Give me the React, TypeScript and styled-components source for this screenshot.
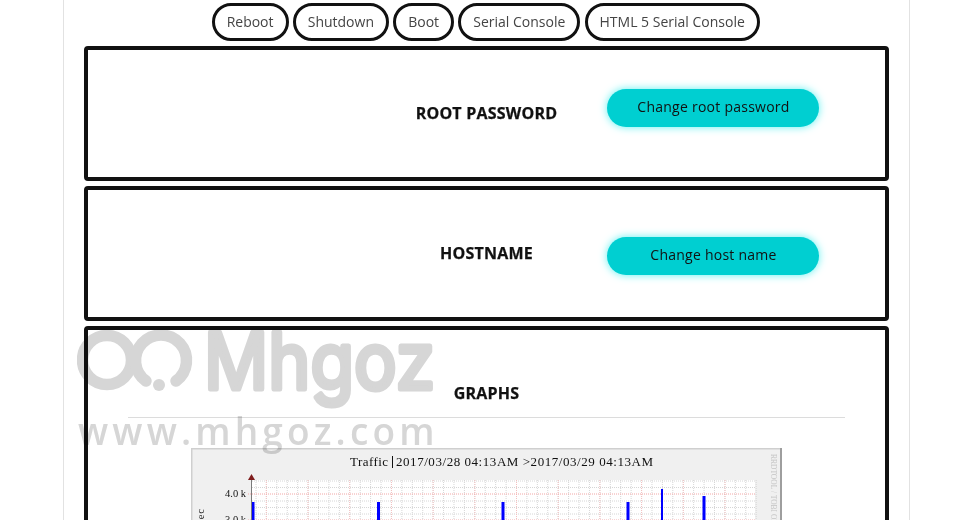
import styled, { createGlobalStyle } from 'styled-components';

const actions = ['Reboot', 'Shutdown', 'Boot', 'Serial Console', 'HTML 5 Serial Console'];

const settings = [
  { title: 'ROOT PASSWORD', action: 'Change root password', lift: 11 },
  { title: 'HOSTNAME', action: 'Change host name', lift: -5 },
];

export default function App() {
  return (
    <>
      <GlobalStyle />
      <Page>
        <Toolbar>
          {actions.map((label) => (
            <PillButton key={label}>{label}</PillButton>
          ))}
        </Toolbar>
        {settings.map((item) => (
          <SettingPanel key={item.title}>
            <SettingTitle>{item.title}</SettingTitle>
            <ActionButton $lift={item.lift}>{item.action}</ActionButton>
          </SettingPanel>
        ))}
        <GraphPanel>
          <GraphTitle>GRAPHS</GraphTitle>
          <Rule />
          <TrafficGraph />
        </GraphPanel>
        <Watermark>
          <LogoMark />
          <WatermarkUrl>www.mhgoz.com</WatermarkUrl>
        </Watermark>
      </Page>
    </>
  );
}

function LogoMark() {
  return (
    <LogoSvg width="360" height="83" viewBox="77 328 360 83" fill="none" stroke="#d6d6d6" strokeLinecap="round" strokeLinejoin="round">
      <circle cx="107" cy="360" r="24.5" strokeWidth="11.5" />
      <path d="M146 381 A25.5 25.5 0 1 1 176 381" strokeWidth="11.5" />
      <circle cx="159" cy="385" r="6" fill="#d6d6d6" stroke="none" />
      <LogoName x="204" y="388.5" fontSize="78" strokeWidth="5" textLength="231" lengthAdjust="spacingAndGlyphs">
        Mhgoz
      </LogoName>
    </LogoSvg>
  );
}

function TrafficGraph() {
  const xMinor = Array.from({ length: 49 }, (_, i) => 256 + i * 10.42);
  const xMajor = Array.from({ length: 12 }, (_, i) => 266.3 + i * 41.7);
  const yMinor = [481, 487.5, 501, 507.5, 514];
  const bars = [
    { x: 252, top: 502, w: 2.5 },
    { x: 377, top: 502, w: 3 },
    { x: 501.5, top: 502, w: 3 },
    { x: 626.5, top: 502, w: 3 },
    { x: 661, top: 489, w: 2 },
    { x: 702.5, top: 496, w: 3 },
  ];
  return (
    <GraphImage>
      <svg width="591" height="200" viewBox="191 448 591 200">
        <rect x="191" y="448" width="591" height="200" fill="#f0f0f0" />
        <path d="M191.5 648V448.5H781" stroke="#cfcfcf" strokeWidth="2" fill="none" />
        <path d="M781 448V648" stroke="#9e9e9e" strokeWidth="2" />
        <rect x="252" y="480" width="503" height="168" fill="#fff" />
        {xMinor.map((x) => (
          <line key={x} x1={x} x2={x} y1="480" y2="648" stroke="#d6d6d6" strokeWidth="1" strokeDasharray="1 1" />
        ))}
        {yMinor.map((y) => (
          <line key={y} x1="252" x2="755" y1={y} y2={y} stroke="#d6d6d6" strokeWidth="1" strokeDasharray="1 1" />
        ))}
        {xMajor.map((x) => (
          <line key={x} x1={x} x2={x} y1="480" y2="648" stroke="#f4c0c0" strokeWidth="1" strokeDasharray="1 1" />
        ))}
        <line x1="248" x2="755" y1="494" y2="494" stroke="#f2a6a6" strokeWidth="1" strokeDasharray="1 1" />
        <line x1="248" x2="755" y1="520" y2="520" stroke="#f2a6a6" strokeWidth="1" strokeDasharray="1 1" />
        {bars.map((b) => (
          <rect key={b.x} x={b.x} y={b.top} width={b.w} height="60" fill="#0000ff" />
        ))}
        <line x1="251.5" x2="251.5" y1="478" y2="648" stroke="#7a7a7a" strokeWidth="1" />
        <path d="M248 480L251.5 474L255 480Z" fill="#7f1d1d" />
        <GraphText x="350" y="465.5" fontSize="13" textLength="38">Traffic</GraphText>
        <line x1="392.5" x2="392.5" y1="456" y2="468" stroke="#111" strokeWidth="1" />
        <GraphText x="396" y="465.5" fontSize="13" textLength="257">2017/03/28 04:13AM &gt;2017/03/29 04:13AM</GraphText>
        <GraphText x="225" y="497" fontSize="10.5" textLength="21">4.0 k</GraphText>
        <GraphText x="225" y="523" fontSize="10.5" textLength="21">3.0 k</GraphText>
        <GraphText x="0" y="0" fontSize="10.5" letterSpacing="0.8" transform="translate(204 548) rotate(-90)">Bits/sec</GraphText>
        <SideLabel x="0" y="0" fontSize="7.5" transform="translate(771 454) rotate(90)">RRDTOOL / TOBI OETIKER</SideLabel>
      </svg>
    </GraphImage>
  );
}

const GlobalStyle = createGlobalStyle`
  html, body {
    margin: 0;
    height: 520px;
    overflow: hidden;
    background: #fff;
  }
`;

const Page = styled.div`
  position: relative;
  box-sizing: border-box;
  width: 847px;
  height: 520px;
  margin-left: 63px;
  padding: 3px 20px 0;
  overflow: hidden;
  border-left: 1px solid #e2e2e2;
  border-right: 1px solid #e2e2e2;
  font-family: 'Open Sans', 'Liberation Sans', sans-serif;
`;

const Toolbar = styled.div`
  display: flex;
  justify-content: center;
  gap: 4.2px;
  height: 38px;
  margin-bottom: 5px;
  padding-right: 1.6px;
`;

const PillButton = styled.button`
  height: 38px;
  padding: 0 12px 2px;
  border: 3px solid #111;
  border-radius: 19px;
  background: #fff;
  color: #444;
  font: 400 14px 'Open Sans', sans-serif;
  white-space: nowrap;
`;

const SettingPanel = styled.section`
  box-sizing: border-box;
  display: grid;
  grid-template-columns: 1fr 240px 1fr;
  align-items: center;
  height: 135px;
  margin-bottom: 5px;
  border: 4px solid #111;
  border-radius: 4px;
`;

const SettingTitle = styled.h3`
  grid-column: 2;
  margin: 0 0 2px;
  color: #111;
  font-size: 16px;
  font-weight: 700;
  line-height: 22px;
  letter-spacing: 0.22px;
  -webkit-text-stroke: 0.25px #111;
  text-align: center;
  white-space: nowrap;
`;

const ActionButton = styled.button<{ $lift: number }>`
  grid-column: 3;
  justify-self: start;
  width: 212px;
  height: 38px;
  margin-bottom: ${(p) => p.$lift}px;
  padding: 0 0 4px 2px;
  border: 0;
  border-radius: 19px;
  background: #00cfd1;
  box-shadow: 0 0 8px #5ff0f0;
  color: #111;
  font: 400 14px 'Open Sans', sans-serif;
  letter-spacing: 0.25px;
`;

const GraphPanel = styled.section`
  box-sizing: border-box;
  height: 400px;
  padding: 52px 40px 0;
  border: 4px solid #111;
  border-radius: 4px;
`;

const GraphTitle = styled.h3`
  margin: 0;
  color: #111;
  font-size: 16px;
  font-weight: 700;
  line-height: 22px;
  letter-spacing: 0.22px;
  -webkit-text-stroke: 0.25px #111;
  text-align: center;
`;

const Rule = styled.hr`
  margin: 13px 0 30px;
  border: 0;
  border-top: 1px solid #dcdcdc;
`;

const GraphImage = styled.div`
  display: flex;
  justify-content: center;
  line-height: 0;
`;

const GraphText = styled.text`
  fill: #111;
  font-family: 'Liberation Serif', serif;
`;

const SideLabel = styled.text`
  fill: #c4c4c4;
  font-family: 'Liberation Serif', serif;
`;

const Watermark = styled.div`
  position: absolute;
  left: 13px;
  top: 328px;
  width: 360px;
  mix-blend-mode: multiply;
  pointer-events: none;
`;

const LogoSvg = styled.svg`
  display: block;
`;

const LogoName = styled.text`
  fill: #d6d6d6;
  font-family: 'Inter', sans-serif;
  font-weight: 400;
`;

const WatermarkUrl = styled.div`
  margin-left: 1px;
  color: #d6d6d6;
  font: 600 37px/40px 'Open Sans', sans-serif;
  letter-spacing: 4.15px;
  white-space: nowrap;
`;
